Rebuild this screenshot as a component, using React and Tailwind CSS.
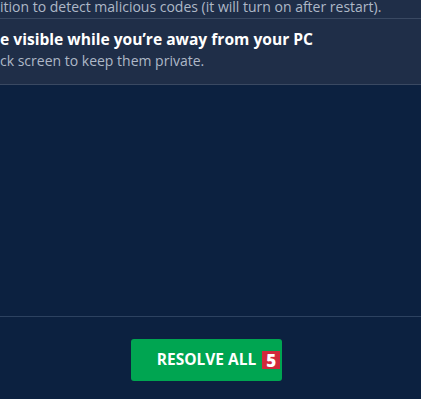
export default function App() {
  return (
    <div className="h-[399px] w-full flex flex-col bg-[#0c2140] overflow-hidden" style={{ fontFamily: '"Open Sans", "Liberation Sans", sans-serif' }}>
      {/* issue list, scrolled */}
      <div className="bg-[#1f2e48]">
        <div className="h-[19px] overflow-hidden border-b border-[#3a4962]">
          <p className="-mt-[1px] text-[14px] leading-4 text-[#aeb8c7] whitespace-nowrap">
            ition to detect malicious codes (it will turn on after restart).
          </p>
        </div>
        <div className="pt-[10px] pb-[15px] border-b border-[#3a4962]">
          <p className="text-[15.6px] leading-5 font-bold text-white whitespace-nowrap">
            e visible while you’re away from your PC
          </p>
          <p className="mt-[4px] text-[14px] leading-4 text-[#aeb8c7] whitespace-nowrap">
            ck screen to keep them private.
          </p>
        </div>
      </div>

      <div className="flex-1" />

      <div className="border-t border-[#2d4260] pt-[22px] pb-[18px] flex justify-center pr-[8px]">
        <button className="w-[151px] h-[42px] rounded-[3px] bg-[#00a551] flex items-center justify-center text-white text-[15.5px] font-bold uppercase">
          <span className="relative">
            Resolve all
            <span className="absolute left-full top-1/2 -translate-y-1/2 ml-[6px] w-[18px] h-[18px] bg-[#d12a3b] flex items-center justify-center text-[17px] font-extrabold leading-none">
              5
            </span>
          </span>
        </button>
      </div>
    </div>
  )
}
